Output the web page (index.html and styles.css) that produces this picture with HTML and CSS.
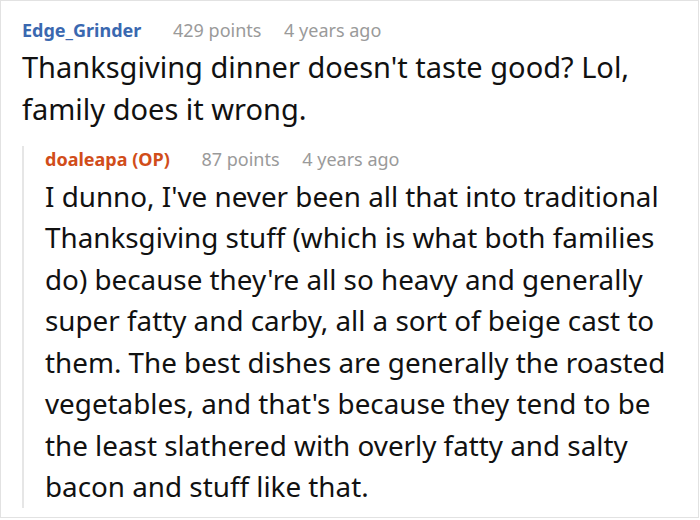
FILE: index.html
```html
<!DOCTYPE html>
<html>
<head>
<meta charset="utf-8">
<link rel="stylesheet" href="styles.css">
</head>
<body>
<div class="frame">
  <div class="comment">
    <div class="meta">
      <span class="author">Edge_Grinder</span>
      <span class="points">429 points</span>
      <span class="time">4 years ago</span>
    </div>
    <p class="text">Thanksgiving dinner doesn't taste good? Lol, family does it wrong.</p>
    <div class="reply">
      <div class="meta">
        <span class="author op">doaleapa (OP)</span>
        <span class="points">87 points</span>
        <span class="time">4 years ago</span>
      </div>
      <p class="text">I dunno, I've never been all that into traditional Thanksgiving stuff (which is what both families do) because they're all so heavy and generally super fatty and carby, all a sort of beige cast to them. The best dishes are generally the roasted vegetables, and that's because they tend to be the least slathered with overly fatty and salty bacon and stuff like that.</p>
    </div>
  </div>
</div>
</body>
</html>
```

FILE: styles.css
```css
html, body {
  margin: 0;
  padding: 0;
  background: #ffffff;
}
.frame {
  box-sizing: border-box;
  width: 699px;
  height: 518px;
  border: 1px solid #e2e2e2;
  overflow: hidden;
  font-family: "Noto Sans", "Open Sans", sans-serif;
  color: #111111;
}
.comment {
  padding: 16px 0 0 21px;
}
.meta {
  font-size: 18px;
  line-height: 26px;
  height: 26px;
  white-space: nowrap;
}
.author {
  font-weight: bold;
  color: #3a68b0;
}
.author.op {
  color: #d14d1a;
}
.points {
  color: #9a9a9a;
  margin-left: 27px;
}
.time {
  color: #9a9a9a;
  margin-left: 18px;
}
.text {
  margin: 3px 0 0 0;
  font-size: 29px;
  line-height: 41.5px;
  width: 670px;
}
.reply {
  margin-top: 28px;
  border-left: 2px solid #e6e6e6;
  padding-left: 21px;
}
.reply .meta {
  margin-top: -11px;
}
.reply .text {
  margin: 3.5px 0 -10px 0;
  font-size: 27.8px;
  width: 640px;
}
```
